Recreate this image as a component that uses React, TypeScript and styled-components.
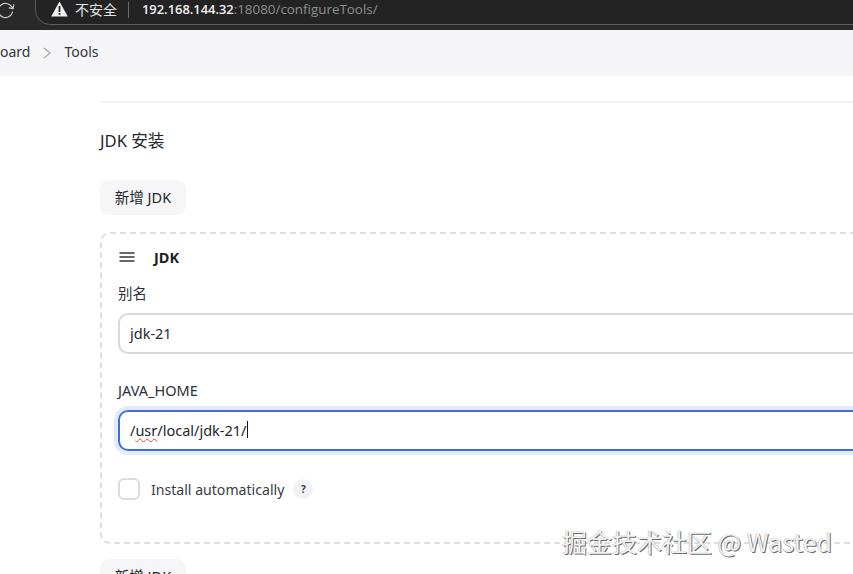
import * as React from 'react'
import styled, { createGlobalStyle } from 'styled-components'
import { RotateCw } from 'lucide-react'

const GlobalStyle = createGlobalStyle`
  html, body {
    margin: 0;
    padding: 0;
    background: #fff;
  }
  body {
    font-family: "Noto Sans", "Noto Sans CJK SC", sans-serif;
    color: #24262b;
  }
`

const Page = styled.div`
  position: relative;
  width: 853px;
  height: 574px;
  overflow: hidden;
  background: #fff;
`

const BrowserBar = styled.div`
  height: 30px;
  background: #292929;
  display: flex;
  align-items: flex-start;
  overflow: hidden;
`

const Reload = styled(RotateCw)`
  flex: none;
  width: 19px;
  height: 19px;
  margin: 1px 0 0 -4px;
  color: #c9c9c9;
  transform: rotate(10deg);
`

const AddressPill = styled.div`
  flex: 1;
  height: 40px;
  margin: -15px -40px 0 20px;
  padding: 14px 0 0 15px;
  box-sizing: border-box;
  border: 1px solid #5c5c5c;
  border-radius: 15px;
  background: #232323;
  display: flex;
  align-items: flex-start;
  font-family: "Open Sans", "Noto Sans CJK SC", sans-serif;
  line-height: 19px;
`

const Warning = styled.svg`
  flex: none;
  width: 17px;
  height: 16px;
  margin-top: 1px;
`

const SecurityLabel = styled.span`
  margin-left: 7px;
  color: #e4e4e4;
  font-family: "Noto Sans CJK SC", sans-serif;
  font-size: 14px;
`

const Separator = styled.span`
  width: 1px;
  height: 16px;
  margin: 2px 13px 0 11px;
  background: #6a6a6a;
`

const Host = styled.span`
  color: #f1f1f1;
  font-weight: 600;
  font-size: 12.9px;
`

const UrlRest = styled.span`
  color: #8f8f8f;
  font-size: 13.4px;
`

const Breadcrumbs = styled.nav`
  height: 46px;
  background: #f5f5f8;
  display: flex;
  align-items: center;
  font-size: 14px;
  padding-bottom: 3px;
  box-sizing: border-box;
  color: #33363b;
`

const Chevron = styled.svg`
  width: 10px;
  height: 12px;
  margin: 2px 12px 0 12px;
`

const Content = styled.main`
  padding: 25px 0 0 100px;
`

const Divider = styled.hr`
  margin: 0;
  border: 0;
  height: 2px;
  background: #f3f3f5;
`

const SectionTitle = styled.h2`
  margin: 28px 0 0;
  height: 21px;
  font-size: 16.6px;
  line-height: 20px;
  font-weight: 400;
`

const AddButton = styled.div`
  width: 86px;
  height: 35px;
  margin-top: 28px;
  padding-bottom: 3px;
  box-sizing: border-box;
  border-radius: 9px;
  background: #f6f6f8;
  display: flex;
  align-items: center;
  justify-content: center;
  font-size: 14.5px;
`

const Card = styled.section`
  width: 900px;
  height: 312px;
  margin-top: 17px;
  padding: 0 16px;
  box-sizing: border-box;
  border: 2px dashed #dcdee1;
  border-radius: 10px;
`

const CardHeader = styled.div`
  display: flex;
  align-items: center;
  gap: 19px;
  height: 20px;
  margin-top: 13px;
  padding-left: 1px;
  font-size: 14.5px;
  font-weight: 700;
  color: #1c1e22;
`

const DragHandle = styled.svg`
  width: 16px;
  height: 12px;
`

const FieldLabel = styled.label<{ $gap: number }>`
  display: block;
  height: 20px;
  margin-top: ${p => p.$gap}px;
  font-size: 14.5px;
  line-height: 18px;
  color: #2d3035;
`

const TextBox = styled.div<{ $focused?: boolean }>`
  position: relative;
  height: 41px;
  margin-top: 9px;
  padding: 0 0 2px 10px;
  box-sizing: border-box;
  display: flex;
  align-items: center;
  border-radius: 10px;
  font-size: 14.5px;
  border: 2px solid ${p => (p.$focused ? '#3f6fd0' : '#d6d9dc')};
  box-shadow: ${p => (p.$focused ? '0 0 0 4px #e4eafa' : 'none')};
`

const Misspelled = styled.span`
  text-decoration: underline wavy #e0443e 1px;
  text-underline-offset: 2px;
`

const Caret = styled.span`
  width: 1px;
  height: 17px;
  background: #111;
`

const CheckRow = styled.div`
  display: flex;
  align-items: center;
  margin-top: 27px;
  font-size: 14.1px;
  color: #3a3d42;
`

const CheckBox = styled.span`
  width: 22px;
  height: 22px;
  box-sizing: border-box;
  border: 2px solid #dadcdf;
  border-radius: 6px;
  margin-right: 11px;
`

const HelpBadge = styled.span`
  width: 20px;
  height: 20px;
  margin-left: 9px;
  border-radius: 50%;
  background: #f1f2f4;
  display: flex;
  align-items: center;
  justify-content: center;
  font-size: 10px;
  font-weight: 700;
`

const NextButton = styled(AddButton)`
  margin-top: 15px;
`

const Watermark = styled.div`
  position: absolute;
  left: 562px;
  top: 525px;
  font-family: "Noto Sans CJK SC", sans-serif;
  font-size: 25px;
  line-height: 32px;
  white-space: nowrap;
  color: #f2f2f2;
  text-shadow: 1px 1px 0 #6b6b6b, -0.5px -0.5px 0 #b5b5b5;
`

export default function App() {
  return (
    <Page>
      <GlobalStyle />
      <BrowserBar>
        <Reload strokeWidth={1.5} />
        <AddressPill>
          <Warning viewBox="0 0 17 16">
            <path d="M8.5 0.5 L16.8 15.5 H0.2 Z" fill="#f2f2f2" />
            <rect x="7.6" y="5" width="1.8" height="6" fill="#232323" />
            <rect x="7.6" y="12" width="1.8" height="1.8" fill="#232323" />
          </Warning>
          <SecurityLabel>不安全</SecurityLabel>
          <Separator />
          <Host>192.168.144.32</Host>
          <UrlRest>:18080/configureTools/</UrlRest>
        </AddressPill>
      </BrowserBar>
      <Breadcrumbs>
        <span>oard</span>
        <Chevron viewBox="0 0 10 12">
          <path d="M2 1 L8 6 L2 11" fill="none" stroke="#a9abb0" strokeWidth="1.3" />
        </Chevron>
        <span>Tools</span>
      </Breadcrumbs>
      <Content>
        <Divider />
        <SectionTitle>JDK 安装</SectionTitle>
        <AddButton>新增 JDK</AddButton>
        <Card>
          <CardHeader>
            <DragHandle viewBox="0 0 16 12">
              <path d="M0.5 2 H15.5 M0.5 6 H15.5 M0.5 10 H15.5" stroke="#33363b" strokeWidth="1.6" />
            </DragHandle>
            JDK
          </CardHeader>
          <FieldLabel $gap={17}>别名</FieldLabel>
          <TextBox>jdk-21</TextBox>
          <FieldLabel $gap={27}>JAVA_HOME</FieldLabel>
          <TextBox $focused>
            /<Misspelled>usr</Misspelled>/local/jdk-21/<Caret />
          </TextBox>
          <CheckRow>
            <CheckBox />
            Install automatically
            <HelpBadge>?</HelpBadge>
          </CheckRow>
        </Card>
        <NextButton>新增 JDK</NextButton>
      </Content>
      <Watermark>掘金技术社区 @ Wasted</Watermark>
    </Page>
  )
}
